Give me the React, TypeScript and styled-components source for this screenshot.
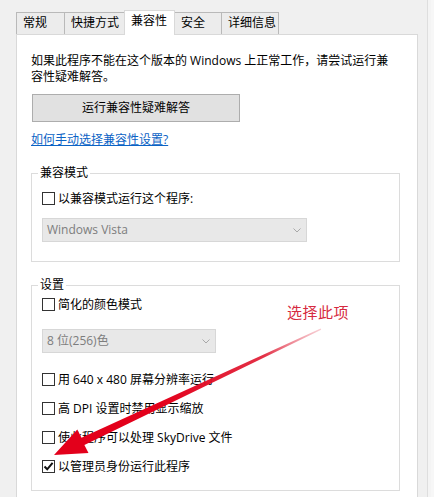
import React from "react";
import styled, { createGlobalStyle } from "styled-components";

const Global = createGlobalStyle`
  html, body { margin: 0; padding: 0; background: #f0f0f0; }
  * { box-sizing: border-box; }
`;

const Root = styled.div`
  position: relative;
  width: 434px;
  height: 497px;
  overflow: hidden;
  display: flex;
  background: #f0f0f0;
  font-family: "Open Sans", "Noto Sans CJK SC", sans-serif;
  font-size: 12px;
  color: #000;
`;

const Main = styled.div`
  flex: 0 0 427px;
  display: flex;
  flex-direction: column;
  padding: 10px 9px 0 16px;
`;

const EdgeStrip = styled.div`
  flex: 1;
  background: #f4f4f4;
  border-left: 1px solid #dedede;
  box-shadow: inset -3px 0 0 #f7f7f7;
`;

const TabRow = styled.div`
  display: flex;
  align-items: flex-end;
  height: 24px;
`;

const Tab = styled.div<{ $w: number; $active?: boolean }>`
  width: ${(p) => p.$w}px;
  height: ${(p) => (p.$active ? 25 : 22)}px;
  margin-bottom: ${(p) => (p.$active ? -1 : 0)}px;
  position: ${(p) => (p.$active ? "relative" : "static")};
  z-index: ${(p) => (p.$active ? 1 : "auto")};
  background: ${(p) => (p.$active ? "#ffffff" : "#ececec")};
  border: 1px solid ${(p) => (p.$active ? "#d9d9d9" : "#b9b9b9")};
  border-bottom: none;
  padding: 2px 0 0 6px;
  line-height: 16px;
  white-space: nowrap;
  & + & {
    margin-left: -1px;
  }
`;

const Panel = styled.div`
  flex: 1;
  background: #ffffff;
  border: 1px solid #d9d9d9;
  border-bottom: none;
  padding: 18px 17px 0 14px;
  display: flex;
  flex-direction: column;
  align-items: flex-start;
`;

const Intro = styled.p`
  margin: 0;
  line-height: 16px;
  white-space: nowrap;
`;

const Button = styled.div`
  margin: 9px 0 0 1px;
  width: 208px;
  height: 28px;
  background: #e1e1e1;
  border: 1px solid #adadad;
  display: flex;
  align-items: center;
  justify-content: center;
  line-height: 16px;
`;

const Link = styled.a`
  margin-top: 10px;
  line-height: 16px;
  color: #0b63c5;
  text-decoration: underline;
  cursor: pointer;
`;

const Group = styled.fieldset<{ $top: number; $bottom: number }>`
  width: 100%;
  margin: ${(p) => p.$top}px 0 0 0;
  padding: 0 10px ${(p) => p.$bottom}px 10px;
  border: 1px solid #dcdcdc;
  min-width: 0;
  display: flex;
  flex-direction: column;
  align-items: flex-start;
`;

const Legend = styled.legend`
  padding: 0 2px;
  margin-left: -4px;
  line-height: 16px;
  font-size: 12px;
`;

const Row = styled.div<{ $top: number }>`
  display: flex;
  align-items: center;
  gap: 3px;
  height: 17px;
  margin-top: ${(p) => p.$top}px;
  line-height: 16px;
  white-space: nowrap;
`;

const Box = styled.span`
  width: 13px;
  height: 13px;
  border: 1px solid #333333;
  background: #ffffff;
  display: inline-flex;
  align-items: center;
  justify-content: center;
  flex: 0 0 13px;
`;

const Select = styled.div<{ $w: number; $top: number }>`
  width: ${(p) => p.$w}px;
  height: 24px;
  margin-top: ${(p) => p.$top}px;
  background: #e8e8e8;
  border: 1px solid #d7d7d7;
  color: #7d7d7d;
  display: flex;
  align-items: center;
  justify-content: space-between;
  padding: 0 5px 0 4px;
  line-height: 16px;
`;

const Overlay = styled.div`
  position: absolute;
  inset: 0;
  pointer-events: none;
`;

const Note = styled.span`
  position: absolute;
  left: 287px;
  top: 302px;
  font-family: "Noto Sans CJK SC", sans-serif;
  font-size: 15px;
  line-height: 20px;
  color: #d62a40;
  letter-spacing: 0.5px;
`;

const ArrowSvg = styled.svg`
  position: absolute;
  left: 0;
  top: 0;
`;

const Check: React.FC<{ checked?: boolean; label: string; top: number }> = ({
  checked,
  label,
  top,
}) => (
  <Row $top={top}>
    <Box>
      {checked && (
        <svg width="11" height="11" viewBox="0 0 11 11">
          <path
            d="M1.5 5.5 L4.2 8.3 L9.6 1.8"
            fill="none"
            stroke="#111"
            strokeWidth="2"
          />
        </svg>
      )}
    </Box>
    <span>{label}</span>
  </Row>
);

const Chevron = () => (
  <svg width="8" height="5" viewBox="0 0 8 5">
    <path d="M0.5 0.5 L4 4 L7.5 0.5" fill="none" stroke="#a8a8a8" strokeWidth="1" />
  </svg>
);

const DropDown: React.FC<{ w: number; top: number; value: string }> = ({ w, top, value }) => (
  <Select $w={w} $top={top}>
    <span>{value}</span>
    <Chevron />
  </Select>
);

const tabs = [
  { label: "常规", w: 49 },
  { label: "快捷方式", w: 61 },
  { label: "兼容性", w: 51, active: true },
  { label: "安全", w: 48 },
  { label: "详细信息", w: 58 },
];

export default function App() {
  return (
    <Root>
      <Global />
      <Main>
        <TabRow>
          {tabs.map((t) => (
            <Tab key={t.label} $w={t.w} $active={t.active}>
              {t.label}
            </Tab>
          ))}
        </TabRow>
        <Panel>
          <Intro>
            如果此程序不能在这个版本的 Windows 上正常工作，请尝试运行兼
            <br />
            容性疑难解答。
          </Intro>
          <Button>运行兼容性疑难解答</Button>
          <Link>如何手动选择兼容性设置?</Link>
          <Group $top={17} $bottom={19}>
            <Legend>兼容模式</Legend>
            <Check top={9} label="以兼容模式运行这个程序:" />
            <DropDown w={265} top={11} value="Windows Vista" />
          </Group>
          <Group $top={15} $bottom={15}>
            <Legend>设置</Legend>
            <Check top={3} label="简化的颜色模式" />
            <DropDown w={174} top={16} value="8 位(256)色" />
            <Check top={18} label="用 640 x 480 屏幕分辨率运行" />
            <Check top={12} label="高 DPI 设置时禁用显示缩放" />
            <Check top={12} label="使此程序可以处理 SkyDrive 文件" />
            <Check top={12} checked label="以管理员身份运行此程序" />
          </Group>
        </Panel>
      </Main>
      <EdgeStrip />
      <Overlay>
        <Note>选择此项</Note>
        <ArrowSvg width="434" height="497" viewBox="0 0 434 497">
          <defs>
            <linearGradient
              id="arrowGrad"
              gradientUnits="userSpaceOnUse"
              x1="321"
              y1="329"
              x2="160"
              y2="405"
            >
              <stop offset="0" stopColor="#f0a0aa" stopOpacity="0.5" />
              <stop offset="0.35" stopColor="#e01a32" stopOpacity="0.9" />
              <stop offset="1" stopColor="#e3001b" />
            </linearGradient>
          </defs>
          <polygon
            points="321.2,329.8 320.6,328.4 81.5,437.7 77.3,429.5 54,455 88.5,453.1 84.4,444.9"
            fill="url(#arrowGrad)"
          />
        </ArrowSvg>
      </Overlay>
    </Root>
  );
}
